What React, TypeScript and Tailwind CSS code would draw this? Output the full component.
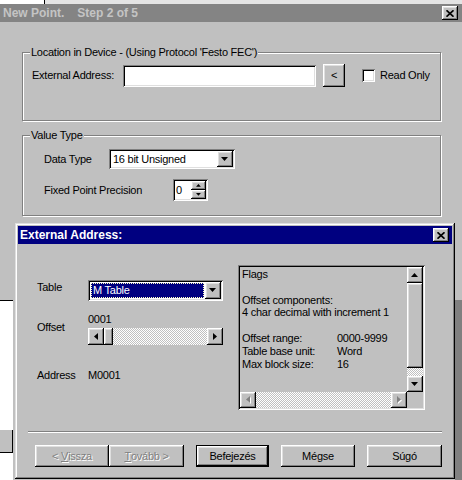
import type { ReactNode } from 'react'

// Win9x bevels
const raised =
  'shadow-[inset_-1px_-1px_0_#000,inset_1px_1px_0_#fff,inset_-2px_-2px_0_#808080,inset_2px_2px_0_#dfdfdf]'
const sunken =
  'shadow-[inset_1px_1px_0_#808080,inset_-1px_-1px_0_#fff,inset_2px_2px_0_#000,inset_-2px_-2px_0_#dfdfdf]'
const frame =
  'shadow-[inset_-1px_-1px_0_#000,inset_1px_1px_0_#dfdfdf,inset_-2px_-2px_0_#808080,inset_2px_2px_0_#fff]'
const dither =
  'bg-[#c0c0c0] bg-[image:repeating-conic-gradient(#c0c0c0_0_25%,#ffffff_0_50%)] bg-[length:2px_2px]'

type Dir = 'up' | 'down' | 'left' | 'right'

const TRI: Record<Dir, { w: number; h: number; d: string }> = {
  up: { w: 7, h: 4, d: 'M0 4h7L3.5 0z' },
  down: { w: 7, h: 4, d: 'M0 0h7L3.5 4z' },
  left: { w: 4, h: 7, d: 'M4 0v7L0 3.5z' },
  right: { w: 4, h: 7, d: 'M0 0v7l4-3.5z' },
}

function Arrow({ dir, disabled, small }: { dir: Dir; disabled?: boolean; small?: boolean }) {
  const t = TRI[dir]
  const s = small ? 0.7 : 1
  return (
    <svg width={(t.w + 1) * s} height={(t.h + 1) * s} viewBox={`0 0 ${t.w + 1} ${t.h + 1}`}>
      {disabled && <path d={t.d} fill="#fff" transform="translate(1 1)" />}
      <path d={t.d} fill={disabled ? '#808080' : '#000'} />
    </svg>
  )
}

function ArrowButton({
  dir,
  disabled,
  small,
  className = 'h-[16px] w-[16px]',
}: {
  dir: Dir
  disabled?: boolean
  small?: boolean
  className?: string
}) {
  return (
    <div className={`flex shrink-0 items-center justify-center bg-[#c0c0c0] ${raised} ${className}`}>
      <Arrow dir={dir} disabled={disabled} small={small} />
    </div>
  )
}

function CloseButton() {
  return (
    <div className={`flex h-[14px] w-[16px] items-center justify-center bg-[#c0c0c0] ${raised}`}>
      <svg width="8" height="7" viewBox="0 0 8 7">
        <path d="M0.5 0.3l7 6.4M7.5 0.3l-7 6.4" stroke="#000" strokeWidth="1.7" />
      </svg>
    </div>
  )
}

function GroupBox({ legend, className, children }: { legend: string; className: string; children: ReactNode }) {
  return (
    <fieldset
      className={`ml-[22px] w-[419px] border border-[#808080] shadow-[inset_1px_1px_0_#fff,1px_1px_0_#fff] ${className}`}
    >
      <legend className="ml-[7px] bg-[#c0c0c0] px-[1px]">{legend}</legend>
      {children}
    </fieldset>
  )
}

function WinButton({
  children,
  width,
  disabled,
  isDefault,
}: {
  children: ReactNode
  width: string
  disabled?: boolean
  isDefault?: boolean
}) {
  return (
    <div
      className={`flex h-[22px] items-center justify-center bg-[#c0c0c0] ${raised} ${width} ${
        isDefault ? 'border border-black' : ''
      } ${disabled ? 'text-[#808080] [text-shadow:1px_1px_0_#fff]' : ''}`}
    >
      {children}
    </div>
  )
}

export default function App() {
  return (
    <div className="relative h-[480px] w-[462px] overflow-hidden bg-[#c0c0c0] font-['Liberation_Sans',Arial,sans-serif] text-[11px] leading-[13px] tracking-[-0.25px] text-black">
      <div className="flex h-[4px]">
        <div className="w-[44px] bg-white" />
        <div className="w-[1px] bg-black" />
        <div className="flex-1 bg-[#e4e4e4]" />
      </div>

      <div className="flex h-[18px] items-center justify-between bg-[#848484] pl-[3px] pr-[4px]">
        <span className="text-[12px] font-bold tracking-[0px] text-[#c4c4c4]">
          New Point.<span className="ml-[13px]">Step 2 of 5</span>
        </span>
        <CloseButton />
      </div>

      <GroupBox legend="Location in Device - (Using Protocol 'Festo FEC')" className="mt-[24px] h-[75px]">
        <div className="mt-[5px] flex items-center pl-[9px]">
          <span className="w-[91px]">External Address:</span>
          <div className={`h-[22px] w-[193px] bg-white ${sunken}`} />
          <div className={`ml-[7px] flex h-[23px] w-[22px] items-center justify-center ${raised}`}>&lt;</div>
          <div className={`ml-[17px] h-[13px] w-[13px] bg-white ${sunken}`} />
          <span className="ml-[5px]">Read Only</span>
        </div>
      </GroupBox>

      <GroupBox legend="Value Type" className="mt-[8px] h-[87px]">
        <div className="mt-[7px] flex items-center pl-[21px]">
          <span className="w-[65px]">Data Type</span>
          <div className={`flex h-[20px] w-[126px] items-center bg-white p-[2px] ${sunken}`}>
            <span className="flex-1 pl-[2px]">16 bit Unsigned</span>
            <ArrowButton dir="down" />
          </div>
        </div>
        <div className="mt-[10px] flex items-center pl-[21px]">
          <span className="w-[129px]">Fixed Point Precision</span>
          <div className={`flex h-[22px] w-[35px] bg-white p-[2px] ${sunken}`}>
            <span className="flex-1 pl-[1px] leading-[18px]">0</span>
            <div className="flex w-[15px] flex-col">
              <ArrowButton dir="up" small className="h-[9px] w-[15px]" />
              <ArrowButton dir="down" small className="h-[9px] w-[15px]" />
            </div>
          </div>
        </div>
      </GroupBox>

      {/* bits of the window underneath the dialog */}
      <div className="absolute left-0 top-[300px] flex h-[180px] w-[13px] flex-col border-t border-black bg-white">
        <div className="mt-[129px] h-[23px] border-b border-r border-black bg-[#c0c0c0]" />
      </div>
      <div className="absolute right-0 top-[300px] h-[180px] w-[7px] bg-[#808080]" />

      <div className={`absolute left-[15px] top-[223px] flex h-[256px] w-[440px] flex-col bg-[#c0c0c0] p-[3px] ${frame}`}>
        <div className="flex h-[18px] items-center justify-between bg-[#000080] pl-[2px] pr-[3px]">
          <span className="text-[12px] font-bold tracking-[0px] text-white">External Address:</span>
          <CloseButton />
        </div>

        <div className="flex">
          <div className="ml-[19px] mt-[36px] flex flex-col">
            <div className="flex items-start">
              <span className="mt-[1px] w-[51px]">Table</span>
              <div className={`flex h-[21px] w-[135px] bg-white p-[2px] ${sunken}`}>
                <span className="m-[1px] flex flex-1 items-center border border-dotted border-[#ffffc0] bg-[#000080] pl-[1px] text-white">
                  M Table
                </span>
                <ArrowButton dir="down" className="h-[17px] w-[16px]" />
              </div>
            </div>

            <div className="mt-[12px] flex items-start">
              <span className="mt-[8px] w-[51px]">Offset</span>
              <div className="flex flex-col">
                <span>0001</span>
                <div className="mt-[2px] flex h-[17px] w-[135px]">
                  <ArrowButton dir="left" className="h-[17px] w-[16px]" />
                  <div className={`h-[17px] w-[9px] ${raised}`} />
                  <div className={`flex-1 ${dither}`} />
                  <ArrowButton dir="right" className="h-[17px] w-[16px]" />
                </div>
              </div>
            </div>

            <div className="mt-[24px] flex">
              <span className="w-[51px]">Address</span>
              <span>M0001</span>
            </div>
          </div>

          <div className={`ml-[15px] mt-[21px] flex h-[145px] w-[187px] flex-col p-[2px] ${sunken}`}>
            <div className="flex flex-1">
              <div className="flex-1 pl-[2px] pt-[1px] leading-[12.8px]">
                <div>Flags</div>
                <div className="h-[12.8px]" />
                <div>Offset components:</div>
                <div>4 char decimal with increment 1</div>
                <div className="h-[12.8px]" />
                <div className="grid grid-cols-[95px_1fr]">
                  <span>Offset range:</span>
                  <span>0000-9999</span>
                  <span>Table base unit:</span>
                  <span>Word</span>
                  <span>Max block size:</span>
                  <span>16</span>
                </div>
              </div>
              <div className="flex w-[16px] flex-col">
                <ArrowButton dir="up" />
                <div className={`h-[85px] ${raised}`} />
                <div className={`flex-1 ${dither}`} />
                <ArrowButton dir="down" />
              </div>
            </div>
            <div className="flex h-[16px]">
              <ArrowButton dir="left" disabled />
              <div className={`flex-1 ${dither}`} />
              <ArrowButton dir="right" disabled />
              <div className="w-[16px]" />
            </div>
          </div>
        </div>

        <div className="ml-[10px] mt-[21px] h-[2px] w-[414px] border-b border-t border-b-white border-t-[#808080]" />

        <div className="ml-[17px] mt-[12px] flex">
          <WinButton width="w-[74px]" disabled>
            &lt;&nbsp;<u>V</u>issza
          </WinButton>
          <WinButton width="w-[75px]" disabled>
            <u>T</u>ovább&nbsp;&gt;
          </WinButton>
          <div className="ml-[12px]">
            <WinButton width="w-[73px]" isDefault>
              Befejezés
            </WinButton>
          </div>
          <div className="ml-[12px]">
            <WinButton width="w-[74px]">Mégse</WinButton>
          </div>
          <div className="ml-[12px]">
            <WinButton width="w-[75px]">Súgó</WinButton>
          </div>
        </div>
      </div>
    </div>
  )
}
